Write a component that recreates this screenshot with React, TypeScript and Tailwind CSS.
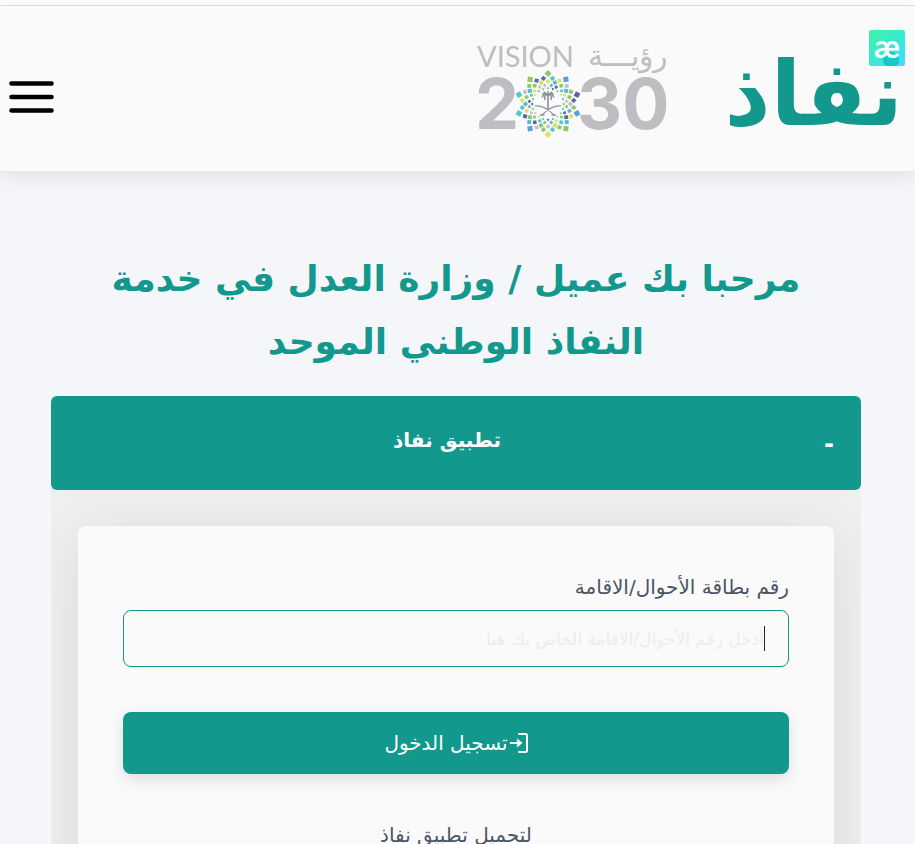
import React from "react";

const TIP_COLORS = [
  "#8cc96b", "#5b9fd6", "#5a67a5", "#5b9fd6", "#8cc96b",
  "#dbe562", "#5b9fd6", "#4fc9cf", "#4fc9cf", "#8cc96b",
];
const TILE_COLORS = ["#5a67a5", "#4fc9cf", "#8cc96b", "#dbe562", "#c4c3c8", "#5bb5d6", "#8cc96b"];

const ROWS = [
  { r: 26, size: 3.9, offsets: [-10, 10] },
  { r: 22.5, size: 3.6, offsets: [-18, 0, 18] },
  { r: 18.8, size: 2.8, offsets: [-10, 10] },
  { r: 15.8, size: 2, offsets: [0, 18] },
];

function Emblem() {
  const tiles: React.ReactElement[] = [];
  const tile = (key: string, angle: number, r: number, size: number, fill: string) => (
    <rect
      key={key}
      x={-size / 2}
      y={-r - size / 2}
      width={size}
      height={size}
      fill={fill}
      transform={`translate(71 74) rotate(${angle}) rotate(45 0 ${-r})`}
    />
  );
  TIP_COLORS.forEach((color, i) => {
    tiles.push(tile(`tip${i}`, i * 36, 30.5, 5, color));
    ROWS.forEach((row, k) =>
      row.offsets.forEach((o, j) => {
        tiles.push(tile(`${i}-${k}-${j}`, i * 36 + o, row.r, row.size, TILE_COLORS[(i * 3 + k * 2 + j) % 7]));
      }),
    );
  });
  return (
    <g>
      {tiles}
      <g fill="none" stroke="#8b929c" strokeLinecap="round">
        <path d="M71 65 V79" strokeWidth="1.6" />
        <path
          d="M71 65 Q67 61 65.5 67 M71 65 Q67 64 67.8 69.5 M71 65 Q75 61 76.5 67 M71 65 Q75 64 74.2 69.5 M71 65 V61.5 M71 65 L67 62 M71 65 L75 62 M71 65 L65.8 64 M71 65 L76.2 64"
          strokeWidth="1.5"
        />
        <path d="M58 76 Q67 75 77 85 M84 76 Q75 75 65 85" strokeWidth="1.1" />
        <path d="M63.5 85 H67 M75 85 H78.5" strokeWidth="1.3" />
      </g>
    </g>
  );
}

function VisionLogo() {
  return (
    <svg width="194" height="106" viewBox="0 0 194 106" direction="ltr" role="img" aria-label="Vision 2030" className="overflow-visible">
      <g fill="#bfbdc1">
        <text x="0" y="37" fontSize="29" className="font-[Lato,sans-serif] font-normal">VISION</text>
        <text x="190" y="36" fontSize="30" textAnchor="end" className="font-['DejaVu_Sans',sans-serif] font-extralight">رؤيـــة</text>
        <text x="-2" y="99" fontSize="70" className="font-[Inter,sans-serif] font-bold">2</text>
        <text x="100" y="99" fontSize="70" className="font-[Inter,sans-serif] font-bold">30</text>
      </g>
      <Emblem />
    </svg>
  );
}

function LoginIcon() {
  return (
    <svg width="18" height="20" viewBox="0 0 18 20" fill="none" stroke="currentColor" strokeWidth="2" strokeLinecap="round" strokeLinejoin="round" aria-hidden="true">
      <path d="M9 1 H15.5 Q17 1 17 2.5 V17.5 Q17 19 15.5 19 H9" />
      <path d="M0 10 H11" />
      <path d="M7.5 6 L12 10 L7.5 14 Z" fill="currentColor" strokeWidth="0.5" />
    </svg>
  );
}

export default function App() {
  return (
    <div dir="rtl" lang="ar" className="min-h-screen bg-[#f5f6fa] pt-[5px] font-['DejaVu_Sans',sans-serif] text-[#4b5563] shadow-[inset_0_5px_0_#ffffff]">
      <header className="flex h-[166px] items-start justify-between border-t border-[#dddddd] bg-[#fafafa] pr-4 pl-2 shadow-[0_4px_20px_rgba(0,0,0,0.1)]">
        <div className="flex items-start gap-[54px]">
          <a href="#home" className="relative mt-6 block w-[174px] text-[#12988d]" aria-label="نفاذ">
            <svg width="174" height="120" viewBox="0 0 174 120" direction="rtl" aria-hidden="true" className="overflow-visible">
              <text x="178" y="95" fontSize="90" fill="currentColor" className="font-bold">نفاذ</text>
            </svg>
            <span dir="ltr" className="absolute top-0 -right-1.5 flex size-9 items-center justify-center overflow-hidden rounded-xs bg-linear-to-br from-[#3ff3a0] to-[#3fdcff]">
              <span className="absolute top-[22px] left-3.5 size-4 rounded-full bg-[#10cbc8]" />
              <span className="relative pb-1 font-[Lato,sans-serif] text-[32px] leading-8 font-bold text-white">æ</span>
            </span>
          </a>
          <div className="mt-6">
            <VisionLogo />
          </div>
        </div>
        <button type="button" aria-label="القائمة" className="mt-[74px]">
          <svg width="47" height="34" viewBox="0 0 47 34" stroke="#000000" strokeWidth="4.6" strokeLinecap="round">
            <path d="M3.5 3.5 H43.5 M3.5 17 H43.5 M3.5 30.5 H43.5" />
          </svg>
        </button>
      </header>

      <main className="pt-[76px] pr-[54px] pl-[51px]">
        <h1 className="px-12 text-center text-4xl leading-[63px] font-bold text-[#12988d]">
          مرحبا بك عميل / وزارة العدل في خدمة النفاذ الوطني الموحد
        </h1>

        <section className="mt-[23px] bg-[#efefef]">
          <button type="button" aria-expanded="true" className="flex h-[94px] w-full items-center gap-2 rounded-md bg-[#12988d] px-[27px] pb-1.5 text-white">
            <span className="pt-2 text-2xl font-bold">-</span>
            <span className="flex-1 text-center text-xl font-bold">تطبيق نفاذ</span>
          </button>
          <div className="overflow-hidden px-[27px] pt-9">
            <form className="rounded-lg bg-[#fafafa] px-[45px] pt-[45px] pb-12 shadow-[0_12px_60px_rgba(0,0,0,0.09)]">
              <label htmlFor="national-id" className="block text-xl leading-8">
                رقم بطاقة الأحوال/الاقامة
              </label>
              <div className="relative mt-[7px]">
                <input
                  id="national-id"
                  type="text"
                  placeholder="أدخل رقم الأحوال/الاقامة الخاص بك هنا"
                  className="block h-[57px] w-full rounded-lg border border-[#12988d] bg-transparent px-6 text-[17px] text-[#1f2937] outline-none placeholder:text-[#ebedee]"
                />
                <span aria-hidden="true" className="absolute top-4 right-6 h-[25px] w-px bg-[#1f2937]" />
              </div>
              <button type="submit" className="mt-[45px] flex h-[62px] w-full items-center justify-center gap-0.5 rounded-lg bg-[#12988d] text-xl text-white shadow-[0_5px_15px_rgba(0,0,0,0.12)]">
                <LoginIcon />
                تسجيل الدخول
              </button>
              <p className="mt-[45px] text-center text-xl leading-8">لتحميل تطبيق نفاذ</p>
            </form>
          </div>
        </section>
      </main>
    </div>
  );
}
